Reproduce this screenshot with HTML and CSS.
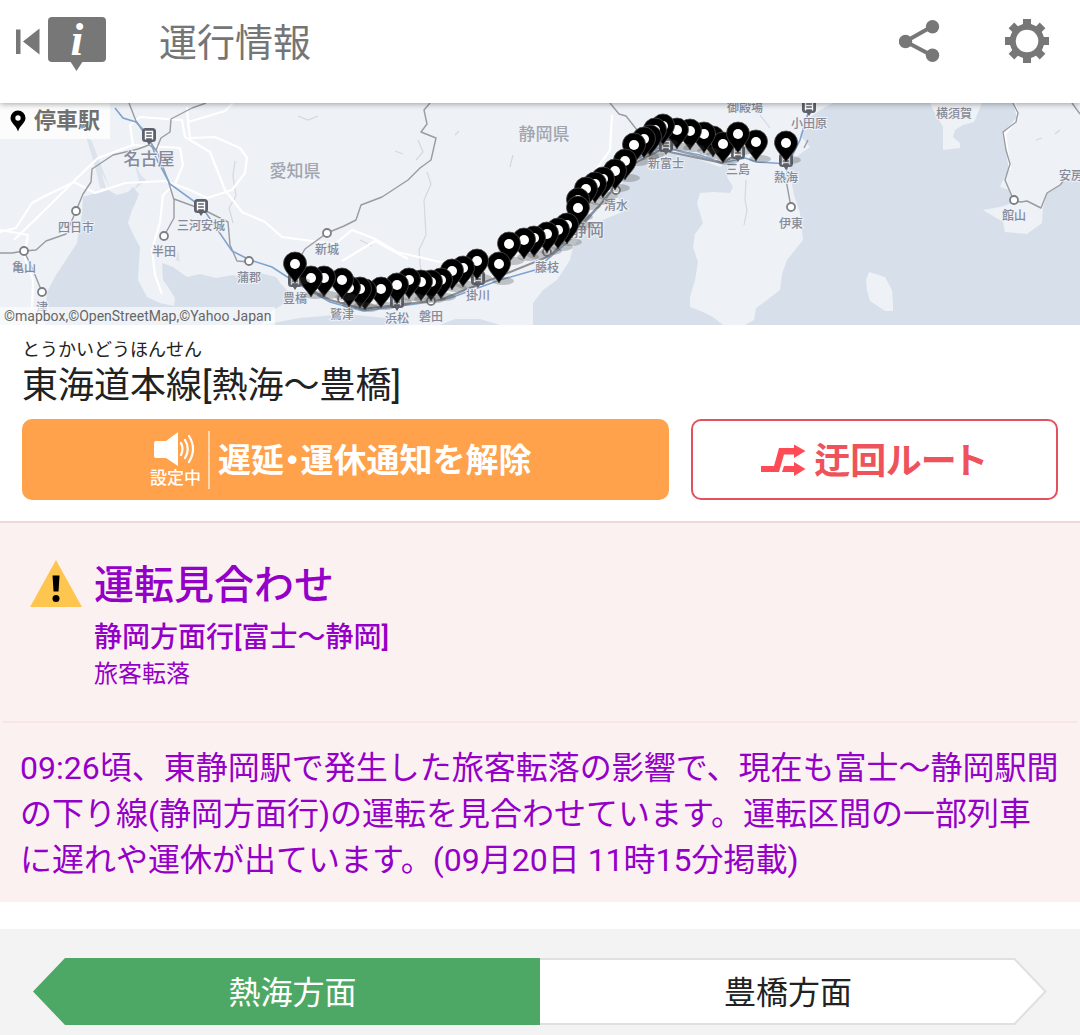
FILE: index.html
```html
<!DOCTYPE html>
<html lang="ja">
<head>
<meta charset="utf-8">
<meta name="viewport" content="width=device-width, initial-scale=1">
<title>運行情報</title>
<link rel="stylesheet" href="styles.css">
</head>
<body>
<header class="bar">
  <button class="icon-btn" type="button" aria-label="戻る">
    <svg width="92" height="56" viewBox="15 16 92 56">
      <g fill="#777">
        <path d="M16 29.500h4.500v24.500H16zM39.500 28.500V54.500L23 41.500z"/>
        <rect x="48" y="17" width="58" height="45" rx="4"/>
        <path d="M70 61h13l-6.500 10z"/>
      </g>
      <text class="info-mark" x="77" y="55" text-anchor="middle">i</text>
    </svg>
  </button>
  <h1 class="bar-title">運行情報</h1>
  <button class="icon-btn" type="button" aria-label="共有">
    <svg width="42" height="44" viewBox="899 19 42 44">
      <path d="M932 26.500L905.500 41.500L932 55.500" fill="none" stroke="#777" stroke-width="4"/>
      <g fill="#777"><circle cx="905.500" cy="41.500" r="6.700"/><circle cx="932.500" cy="26.700" r="6.700"/><circle cx="932.500" cy="55.300" r="6.700"/></g>
    </svg>
  </button>
  <button class="icon-btn gear" type="button" aria-label="設定">
    <svg width="44" height="44" viewBox="-22 -22 44 44">
      <defs><path id="tooth" d="M-4-22h8v5q1 2 4 3v4H-8v-4q3-1 4-3z"/></defs>
      <circle r="14" fill="none" stroke="#777" stroke-width="6.500"/>
      <g fill="#777">
        <use href="#tooth"/><use href="#tooth" transform="rotate(45)"/><use href="#tooth" transform="rotate(90)"/><use href="#tooth" transform="rotate(135)"/>
        <use href="#tooth" transform="rotate(180)"/><use href="#tooth" transform="rotate(225)"/><use href="#tooth" transform="rotate(270)"/><use href="#tooth" transform="rotate(315)"/>
      </g>
      <circle r="11.300" fill="#fff"/>
    </svg>
  </button>
</header>

<main>
<section class="map" aria-label="停車駅の地図">
  <svg class="map-canvas" viewBox="0 103 1080 222">
    <defs>
      <g id="pin">
        <ellipse cx="4" cy="17" rx="11" ry="4" fill="#444" opacity=".28"/>
        <path d="M0 19C-3 13-11.500 7-11.500-.5A11.500 11.500 0 0 1 11.500-.5C11.500 7 3 13 0 19z" fill="#000" stroke="#4a4a4a" stroke-width=".8"/>
        <circle r="5" fill="#fff"/>
      </g>
      <circle id="stop" r="4" fill="#fff" stroke="#7c7f84" stroke-width="1.800"/>
      <g id="train">
        <rect x="-7" y="-7" width="14" height="14" rx="3.500" fill="#5c616c"/>
        <path d="M-3.500 4.500V-3.500h7v8M-3.500-.5h7M-3.500 2.500h7" fill="none" stroke="#fff" stroke-width="1.400"/>
        <path d="M-2 7h4l-2 3z" fill="#5c616c"/>
      </g>
    </defs>
    <rect y="103" width="1080" height="222" fill="#d7e0ea"/>
    <g fill="#eef1f6">
      <path d="M0 103V325H45L47 292L56 275L66 260L77 243L79 229L82 215L83 197L96 193L108 190L117 195L128 192L133 187L139 194L135 204L132 210L128 223L134 236L140 247L139 262L138 280L147 297L160 303L174 306L175 298L168 287L163 280L162 263L173 267L180 272L187 277L200 274L216 278L233 275L247 278L260 273L276 277L281 284L288 291L285 303L270 312L262 325L300 318L345 314L385 318L410 325H440L455 319L480 319L500 325H533L533 303L543 290L557 280L570 260L573 247L583 233L603 220L627 210L617 197L623 180L640 162L653 153L683 152L700 160L720 167L732 160L727 177L733 187L730 193L713 192L700 193L697 203L703 223L695 234L693 247L698 262L695 280L690 297L690 307L703 312L713 317L723 325H745L754 320L756 308L767 300L780 290L782 274L787 260L803 240L800 213L794 195L788 163L803 152L810 147L800 135L807 120L820 110L833 103z"/>
      <path d="M930 103L937 117L943 127L943 150L960 148L960 143L953 137L955 130L963 125L974 122L982 103z"/>
      <path d="M1013 103L1018 117L1002 133L1007 157L1010 167L1003 180L1000 187L1009 190L1013 203L1000 207L983 210L1003 222L1005 232L1027 234L1042 223L1043 208L1047 193L1067 180L1080 170V103z"/>
      <path d="M869 272L885 277L892 290L893 304L893 311L885 311L870 301L867 290L866 280z"/>
    </g>
    <g fill="#d7e0ea" opacity=".8"><path d="M83 127L90 150L96 170L100 188L106 188L101 172L108 184L110 188L100 163L92 142zM133 160L139 180L134 190L146 180L141 175zM128 245l8 4-4 6zM178 250l2 12-4-2z"/></g>
    <g fill="none" stroke="#d3d8e1" stroke-width="1.200">
      <path d="M235 161l-2 15 3 20-7 12 4 15M418 140l5 12-7 8M427 172l4 12-7 16 2 35-7 15 4 50M298 116l10 4 10-4M395 151l8 3M455 135l4-4M513 155l-3 12M746 180l-1 20 2 10-3 15M1036 140l6-2M1055 134l5-4M360 240l12 6M760 115l10 13"/>
    </g>
    <g fill="none" stroke="#fff" stroke-width="2.200" stroke-linejoin="round">
      <path d="M0 232L16 228L32 203L45 196L74 182L95 193L125 183L165 181L190 190L207 198L232 190L245 173L247 158L240 148L215 137L190 138L188 122L225 111L233 103"/>
      <path d="M14 240L50 205L75 180L98 158L133 145L180 148L183 165L175 184L163 195L160 222L152 250L155 275L162 294M133 145L130 125L140 117L182 120L185 137L210 152L218 172L225 190L242 212L265 222L282 237L335 244L352 230L373 238L397 252L440 262L500 262L552 235L582 190L610 150L612 115"/>
      <path d="M0 230L28 235L24 255L33 280L32 310M342 261L375 241L408 259M188 122L187 107M1015 103L1018 118L1005 134L1010 170"/>
    </g>
    <g fill="none" stroke="#999ca2" stroke-width="1.400" stroke-linejoin="round">
      <path d="M0 253H12L24 251L36 250L46 241L66 234L76 211L83 194L91 182L92 169L113 155L138 149L149 145L156 150L161 138L170 132L171 119L192 108L206 103"/>
      <path d="M129 103L136 121L149 140L157 152L168 180L174 200V218L164 236M174 199L204 210L228 222L230 245L237 261L250 262M24 251L33 270L42 292"/>
      <path d="M296 264L305 249L327 233L344 226L356 220L361 205L382 197L408 180L420 168L431 160L436 138L421 132L427 124L424 110L430 103"/>
      <path d="M610 103L619 114L626 116L637 130M668 148L722 163L738 153M788 160L786 180L791 207M804 148L808 140M1013 103L1018 113L1016 122L1003 132L1006 150L1010 164L1005 180L1014 201L1021 202L1027 201L1041 208L1047 193L1060 185L1066 178M1072 103l8 11"/>
    </g>
    <path d="M115 108L123 118L136 122L149 136L156 158L170 184L202 207L232 251L250 260L272 267L295 282L330 302L363 311L430 302L450 298L500 280L535 270L570 240L600 205L635 160L660 147L700 155L722 163L745 158L757 162L788 164L800 140L809 110" fill="none" stroke="#7fa3cf" stroke-width="1.600"/>
    <path d="M295 282L330 300L363 309L440 300L500 276L550 256L600 205L635 163L660 150L722 163L738 154" fill="none" stroke="#8d9096" stroke-width="2"/>
    <use href="#stop" x="76" y="211"/><use href="#stop" x="24" y="251"/><use href="#stop" x="42" y="292"/><use href="#stop" x="164" y="236"/><use href="#stop" x="249" y="261"/><use href="#stop" x="327" y="233"/><use href="#stop" x="791" y="207"/><use href="#stop" x="1014" y="200"/><use href="#stop" x="342" y="299"/><use href="#stop" x="431" y="301"/><use href="#stop" x="547" y="252"/><use href="#stop" x="616" y="190"/>
    <use href="#train" x="149" y="135"/><use href="#train" x="201" y="206"/><use href="#train" x="809" y="106"/><use href="#train" x="295" y="280"/><use href="#train" x="397" y="301"/><use href="#train" x="478" y="278"/><use href="#train" x="666" y="145"/><use href="#train" x="738" y="152"/><use href="#train" x="786" y="160"/>
    <g class="place big">
      <text x="149" y="165">名古屋</text><text x="587" y="236">静岡</text>
      <text class="pref" x="295" y="177">愛知県</text><text class="pref" x="544" y="140">静岡県</text>
    </g>
    <g class="place">
      <text x="76" y="232">四日市</text><text x="24" y="272">亀山</text><text x="42" y="312">津</text><text x="164" y="256">半田</text><text x="201" y="230">三河安城</text><text x="249" y="282">蒲郡</text>
      <text x="327" y="254">新城</text><text x="295" y="303">豊橋</text><text x="342" y="319">鷲津</text><text x="397" y="323">浜松</text><text x="431" y="321">磐田</text><text x="478" y="300">掛川</text><text x="547" y="272">藤枝</text>
      <text x="616" y="210">清水</text><text x="666" y="168">新富士</text><text x="738" y="174">三島</text><text x="786" y="182">熱海</text><text x="791" y="228">伊東</text><text x="745" y="112">御殿場</text><text x="809" y="128">小田原</text><text x="954" y="118">横須賀</text><text x="1014" y="220">館山</text><text x="1071" y="180">安房</text>
    </g>
    <use href="#pin" x="786" y="143"/><use href="#pin" x="756" y="142"/><use href="#pin" x="713" y="138"/><use href="#pin" x="723" y="144"/><use href="#pin" x="738" y="134"/><use href="#pin" x="704" y="134"/><use href="#pin" x="690" y="131"/><use href="#pin" x="677" y="130"/><use href="#pin" x="663" y="126"/><use href="#pin" x="655" y="130"/><use href="#pin" x="650" y="137"/><use href="#pin" x="644" y="139"/><use href="#pin" x="634" y="145"/><use href="#pin" x="625" y="161"/><use href="#pin" x="615" y="171"/><use href="#pin" x="603" y="179"/><use href="#pin" x="595" y="184"/><use href="#pin" x="586" y="189"/><use href="#pin" x="578" y="200"/><use href="#pin" x="578" y="208"/><use href="#pin" x="567" y="225"/><use href="#pin" x="558" y="230"/><use href="#pin" x="547" y="234"/><use href="#pin" x="534" y="238"/><use href="#pin" x="524" y="240"/><use href="#pin" x="509" y="244"/><use href="#pin" x="499" y="264"/><use href="#pin" x="477" y="261"/><use href="#pin" x="463" y="268"/><use href="#pin" x="452" y="271"/><use href="#pin" x="441" y="280"/><use href="#pin" x="431" y="282"/><use href="#pin" x="421" y="282"/><use href="#pin" x="409" y="280"/><use href="#pin" x="397" y="285"/><use href="#pin" x="381" y="289"/><use href="#pin" x="365" y="291"/><use href="#pin" x="360" y="289"/><use href="#pin" x="349" y="288"/><use href="#pin" x="342" y="280"/><use href="#pin" x="324" y="278"/><use href="#pin" x="311" y="278"/><use href="#pin" x="295" y="264"/>
  </svg>
  <div class="legend">
    <svg width="16" height="22" viewBox="0 0 16 22"><path d="M8 21.500C6 15 .5 13 .5 8a7.500 7.500 0 0 1 15 0c0 5-5.500 7-7.500 13.500z"/><circle cx="8" cy="8" r="2.700" fill="#fff"/></svg>
    停車駅
  </div>
  <div class="credit">©mapbox,©OpenStreetMap,©Yahoo Japan</div>
</section>

<section class="line">
  <p class="kana">とうかいどうほんせん</p>
  <h2 class="line-name">東海道本線[熱海〜豊橋]</h2>
  <div class="actions">
    <button class="btn notify" type="button">
      <span class="state">
        <svg width="42" height="36" viewBox="0 0 42 36">
          <path d="M2 10H12L24 1V35L12 27H2Q0 27 0 25V12Q0 10 2 10z" fill="#fff"/>
          <path d="M27 12Q30 18 27 24M31 9Q36.500 18 31 27M35 5Q43 18 35 31" fill="none" stroke="#fff" stroke-width="2.200" stroke-linecap="round"/>
        </svg>
        <span>設定中</span>
      </span>
      <span class="btn-text notify-text">遅延<span class="dot">・</span>運休通知を解除</span>
    </button>
    <button class="btn detour" type="button">
      <svg width="45" height="34" viewBox="764 444 45 34">
        <path d="M764 467H777L782 449H797V445.500L808.500 452L797 459V455.500H787L782 473H764z" fill="#ff4b55"/>
        <path d="M787 467H797V463L808.500 470L797 477V473H785z" fill="#ff4b55"/>
      </svg>
      <span class="btn-text">迂回ルート</span>
    </button>
  </div>
</section>

<section class="alert">
  <div class="alert-head">
    <svg width="52" height="47" viewBox="0 0 52 47" role="img" aria-label="警告">
      <path d="M26 0L52 47H0z" fill="#ffc64f"/>
      <path d="M22.500 15.500h7l-1 16h-5z"/><circle cx="26" cy="38.500" r="3.500"/>
    </svg>
    <div>
      <h3 class="alert-title">運転見合わせ</h3>
      <p class="alert-area">静岡方面行[富士〜静岡]</p>
      <p class="alert-cause">旅客転落</p>
    </div>
  </div>
  <p class="alert-body">09:26頃、東静岡駅で発生した旅客転落の影響で、現在も富士〜静岡駅間の下り線(静岡方面行)の運転を見合わせています。運転区間の一部列車に遅れや運休が出ています。(09月20日 11時15分掲載)</p>
</section>

<nav class="tabs" aria-label="方面">
  <button class="tab tab-on" type="button">熱海方面</button>
  <button class="tab tab-off" type="button"><span>豊橋方面</span></button>
</nav>
</main>
</body>
</html>
```
FILE: styles.css
```css
* { box-sizing: border-box; }

body {
  margin: 0;
  background: #fff;
  color: #222;
  font-family: Roboto, "Noto Sans CJK JP", sans-serif;
}

h1, h2, h3, p { margin: 0; font-weight: 400; }

button {
  margin: 0;
  padding: 0;
  border: 0;
  background: none;
  color: inherit;
  font: inherit;
  cursor: pointer;
}

svg { display: block; flex: none; }

.bar {
  position: relative;
  z-index: 1;
  display: flex;
  align-items: flex-start;
  padding: 16px 31px 31px 15px;
  background: #fff;
  box-shadow: 0 1px 6px rgba(0, 0, 0, .35);
}

.bar-title {
  flex: 1;
  margin-left: 52px;
  color: #757575;
  font-size: 38px;
  line-height: 54px;
}

.info-mark {
  fill: #fff;
  font: italic 700 46px "Liberation Serif", serif;
}

.bar .icon-btn:nth-of-type(n+2) { margin-top: 3px; }
.gear { margin-left: 64px; }

.map { position: relative; }
.map-canvas { width: 100%; height: auto; }

.place {
  fill: #858998;
  stroke: #eef1f6;
  stroke-width: 2px;
  paint-order: stroke;
  font-size: 12px;
  font-weight: 500;
  text-anchor: middle;
}

.big { font-size: 17px; }
.pref { fill: #a2a5ae; }

.legend {
  position: absolute;
  top: 0;
  left: 0;
  display: flex;
  align-items: center;
  gap: 8px;
  padding: 0 10px;
  background: rgba(255, 255, 255, .8);
  color: #707070;
  font-size: 22px;
  font-weight: 700;
  line-height: 36px;
}

.credit {
  position: absolute;
  bottom: 0;
  left: 0;
  padding: 0 4px;
  background: rgba(255, 255, 255, .6);
  color: #666;
  font-size: 14px;
  line-height: 18px;
}

.line { padding: 13px 22px 21px; }
.kana { font-size: 18px; line-height: 24px; }
.line-name { font-size: 36px; line-height: 48px; }

.actions {
  display: flex;
  gap: 22px;
  margin-top: 9px;
}

.btn {
  display: flex;
  align-items: center;
  justify-content: center;
  height: 81px;
  border-radius: 10px;
  font-weight: 700;
}

.btn-text { padding-bottom: 4px; }

.notify {
  flex: 647;
  gap: 8px;
  padding-right: 10px;
  background: #ffa24b;
  color: #fff;
}

.state {
  display: flex;
  flex-direction: column;
  align-items: center;
  padding-right: 7px;
  border-right: 2px solid #ffd9b0;
  font-size: 17px;
  font-weight: 500;
  line-height: 22px;
}

.notify-text { font-size: 33px; }
.dot { font-feature-settings: "halt"; }

.detour {
  flex: 366;
  gap: 8px;
  padding-right: 2px;
  border: 2px solid #e0535e;
  color: #ee535c;
  font-size: 36px;
  font-feature-settings: "palt";
}

.alert {
  border-top: 2px solid #eed9d9;
  background: #fcf1f1;
  color: #9400c8;
}

.alert-head {
  display: flex;
  gap: 12px;
  margin: 0 3px;
  padding: 37px 26px 29px 27px;
  border-bottom: 2px solid #fae4e4;
}

.alert-title {
  margin-bottom: 8px;
  font-size: 40px;
  font-weight: 500;
  line-height: 52px;
}

.alert-area {
  font-size: 28px;
  font-weight: 500;
  line-height: 36px;
}

.alert-cause { font-size: 24px; line-height: 36px; }

.alert-body {
  padding: 22px 18px 19px 20px;
  font-size: 32px;
  line-height: 46px;
}

.tabs {
  display: flex;
  margin-top: 27px;
  padding: 29px 33px 10px;
  background: #f3f3f3;
}

.tab {
  width: 50%;
  height: 67px;
  font-size: 32px;
}

.tab-on {
  padding: 0 0 4px 12px;
  background: #4ea865;
  color: #fff;
  clip-path: polygon(32px 0, 100% 0, 100% 100%, 32px 100%, 0 50%);
}

.tab-off {
  padding: 2px 3px 2px 0;
  background: #e0e0e0;
  clip-path: polygon(0 0, calc(100% - 32px) 0, 100% 50%, calc(100% - 32px) 100%, 0 100%);
}

.tab-off span {
  display: flex;
  align-items: center;
  justify-content: center;
  height: 100%;
  padding: 0 8px 4px 0;
  background: #fff;
  clip-path: polygon(0 0, calc(100% - 30px) 0, 100% 50%, calc(100% - 30px) 100%, 0 100%);
}
```
